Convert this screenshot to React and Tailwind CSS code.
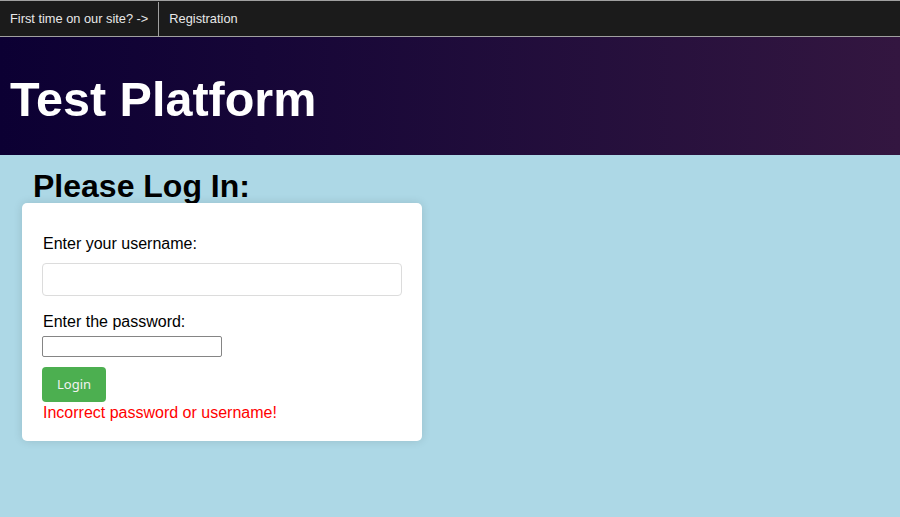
import React from "react";

export default function App() {
  return (
    <div className="min-h-[517px] w-full bg-[#add8e6] font-['Liberation_Sans',Arial,sans-serif]">
      <div className="flex h-[37px] items-stretch border-y border-[#a0a0a0] bg-[#1b1b1b] pt-[1px] text-[12.8px] text-[#e8e8e8]">
        <div className="flex items-center border-r border-[#a0a0a0] pl-[10px] pr-[10px]">First time on our site? -&gt;</div>
        <div className="flex items-center pl-[10px]">Registration</div>
      </div>
      <div className="h-[118px] bg-gradient-to-r from-[#0c0033] to-[#331640] pl-[10px] pt-[38px]">
        <h1 className="text-[48.5px] font-bold leading-none text-white">Test Platform</h1>
      </div>
      <div className="flex flex-col pl-[22px]">
        <h2 className="ml-[11px] mt-[15px] text-[32px] font-bold leading-none text-black">Please Log In:</h2>
        <div className="mt-[1px] flex w-[400px] flex-col rounded-[5px] bg-white px-[20px] pb-[18px] pt-[31px] shadow-[0_0_10px_rgba(0,0,0,0.12)]">
          <label className="ml-[1px] text-[16px] leading-[20px] text-black">Enter your username:</label>
          <input type="text" className="mt-[9px] h-[33px] w-[360px] rounded-[4px] border border-[#dcdcdc] bg-white px-2 outline-none" />
          <label className="ml-[1px] mt-[16px] text-[16px] leading-[20px] text-black">Enter the password:</label>
          <input type="password" className="mt-[4px] h-[21px] w-[180px] rounded-[2px] border border-[#858585] bg-white px-[2px] outline-none" />
          <button className="mt-[10px] flex h-[35px] w-[64px] items-center justify-center rounded-[4px] bg-[#4caf50] font-['Noto_Sans',sans-serif] text-[13px] text-[#f2f2f2]">Login</button>
          <div className="ml-[1px] mt-[1px] text-[16px] leading-[20px] text-[#ff0000]">Incorrect password or username!</div>
        </div>
      </div>
    </div>
  );
}
